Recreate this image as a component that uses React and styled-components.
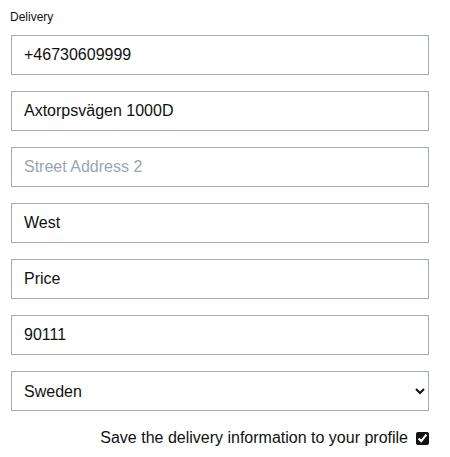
import React from "react";
import styled, { createGlobalStyle } from "styled-components";

const GlobalStyle = createGlobalStyle`
  body {
    margin: 0;
    background: #fff;
    font-family: "Liberation Sans", Arial, sans-serif;
  }
`;

const Form = styled.form`
  width: 418px;
  padding: 10px 0 0 11px;
  display: flex;
  flex-direction: column;
`;

const Legend = styled.div`
  font-size: 12px;
  color: #111;
  margin: 0 0 11px -1px;
  line-height: 14px;
`;

const Fields = styled.div`
  display: flex;
  flex-direction: column;
  gap: 16px;
`;

const Input = styled.input`
  box-sizing: border-box;
  width: 100%;
  height: 40px;
  padding: 0 12px;
  border: 1px solid #a3adb8;
  border-radius: 0;
  font-family: inherit;
  font-size: 16px;
  color: #111;
  outline: none;

  &::placeholder {
    color: #9aa5b1;
  }
`;

const Select = styled.select`
  box-sizing: border-box;
  width: 100%;
  height: 40px;
  padding: 0 8px;
  border: 1px solid #a3adb8;
  border-radius: 0;
  background: #fff;
  font-family: inherit;
  font-size: 16px;
  color: #111;
`;

const SaveRow = styled.label`
  display: flex;
  justify-content: flex-end;
  align-items: center;
  gap: 8px;
  margin-top: 18px;
  font-size: 16px;
  color: #111;
`;

const Check = styled.input`
  margin: 0;
  width: 13px;
  height: 13px;
  accent-color: #111;
`;

export default function App() {
  return (
    <>
      <GlobalStyle />
      <Form>
        <Legend>Delivery</Legend>
        <Fields>
          <Input defaultValue="+46730609999" />
          <Input defaultValue="Axtorpsvägen 1000D" />
          <Input placeholder="Street Address 2" />
          <Input defaultValue="West" />
          <Input defaultValue="Price" />
          <Input defaultValue="90111" />
          <Select defaultValue="SE">
            <option value="SE">Sweden</option>
            <option value="NO">Norway</option>
          </Select>
        </Fields>
        <SaveRow>
          Save the delivery information to your profile
          <Check type="checkbox" defaultChecked />
        </SaveRow>
      </Form>
    </>
  );
}
